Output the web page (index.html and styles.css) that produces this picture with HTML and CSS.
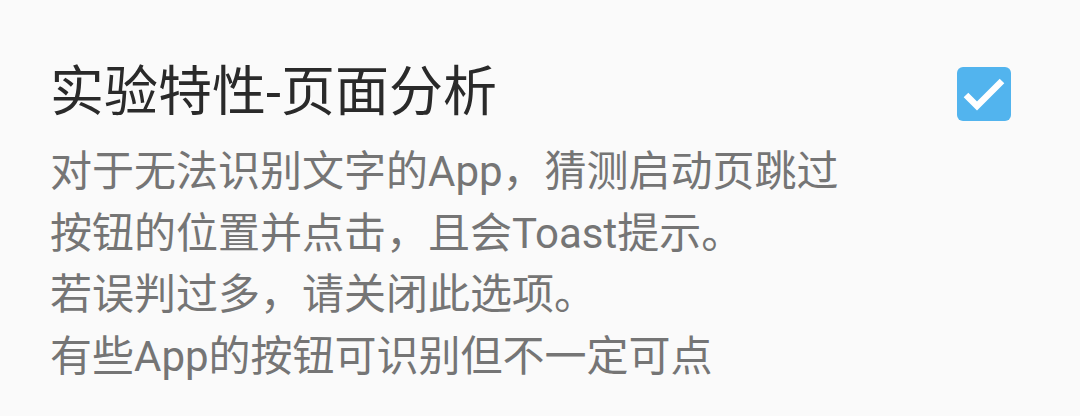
FILE: index.html
```html
<!DOCTYPE html>
<html lang="zh-CN">
<head>
<meta charset="utf-8">
<link rel="stylesheet" href="styles.css">
</head>
<body>
<div class="pref">
  <div class="pref-text">
    <div class="pref-title">实验特性-页面分析</div>
    <div class="pref-summary">对于无法识别文字的App，猜测启动页跳过<br>按钮的位置并点击，且会Toast提示。<br>若误判过多，请关闭此选项。<br>有些App的按钮可识别但不一定可点</div>
  </div>
  <div class="pref-widget">
    <svg class="checkbox" viewBox="0 0 54 54" width="54" height="54">
      <rect x="0" y="0" width="54" height="54" rx="6" ry="6" fill="#52b4ee"/>
      <path d="M9 28 L20 39 L45 14" fill="none" stroke="#ffffff" stroke-width="6.5" stroke-linecap="butt" stroke-linejoin="miter"/>
    </svg>
  </div>
</div>
</body>
</html>
```
FILE: styles.css
```css
html, body {
  margin: 0;
  padding: 0;
  background: #fafafa;
  width: 1080px;
  height: 416px;
  overflow: hidden;
}
.pref {
  display: flex;
  justify-content: space-between;
  align-items: flex-start;
  padding: 62px 69px 0 50px;
  font-family: Roboto, "Noto Sans CJK SC", sans-serif;
}
.pref-text {
  flex: 1;
}
.pref-title {
  font-size: 54px;
  line-height: 62px;
  color: #2a2a2a;
}
.pref-summary {
  margin-top: 17px;
  font-size: 42px;
  line-height: 61.5px;
  color: #757575;
}
.pref-widget {
  margin-top: 5px;
}
.checkbox {
  display: block;
}
```
